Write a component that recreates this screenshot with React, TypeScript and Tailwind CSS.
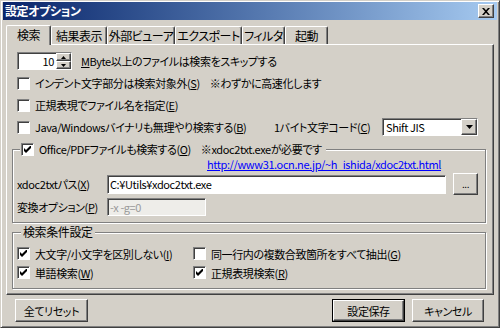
import React from 'react';

const raised =
  'border border-t-white border-l-white border-r-[#404040] border-b-[#404040] shadow-[inset_-1px_-1px_0_#808080]';
const sunken =
  'border border-t-[#808080] border-l-[#808080] border-r-white border-b-white shadow-[inset_1px_1px_0_#404040]';
const etched = 'border border-[#808080] shadow-[inset_1px_1px_0_#fff,1px_1px_0_#fff]';

function K({ c }: { c: string }) {
  return <span className="underline underline-offset-[1px]">{c}</span>;
}

function Check({ on }: { on?: boolean }) {
  return (
    <span className={`w-[13px] h-[13px] bg-white shrink-0 flex items-center justify-center ${sunken}`}>
      {on && (
        <svg width="7" height="7" viewBox="0 0 7 7">
          <path d="M0 2 L2 4 L7 -1 L7 2 L2 7 L0 5 Z" fill="#000" />
        </svg>
      )}
    </span>
  );
}

function CheckRow({ on, children }: { on?: boolean; children: React.ReactNode }) {
  return (
    <div className="flex items-center gap-[5px] h-[22px]">
      <Check on={on} />
      <span className="whitespace-nowrap">{children}</span>
    </div>
  );
}

function Btn({ label, def, w }: { label: string; def?: boolean; w: string }) {
  if (def) {
    return (
      <div className={`${w} h-[23px] border border-black`}>
        <div className={`h-full flex items-center justify-center ${raised}`}>{label}</div>
      </div>
    );
  }
  return <div className={`${w} h-[23px] flex items-center justify-center ${raised}`}>{label}</div>;
}

const tabs = [
  { t: '結果表示', w: 'w-[56px]' },
  { t: '外部ビューア', w: 'w-[68px]' },
  { t: 'エクスポート', w: 'w-[67px]' },
  { t: 'フィルタ', w: 'w-[43px]' },
  { t: '起動', w: 'w-[43px]' },
];

export default function App() {
  return (
    <div className="w-[500px] h-[328px] bg-[#d4d0c8] text-[11px] leading-[14px] tracking-[-0.4px] text-black font-['Noto_Sans_CJK_JP',sans-serif] [font-feature-settings:'palt'] border border-t-[#d4d0c8] border-l-[#d4d0c8] border-r-[#404040] border-b-[#404040] shadow-[inset_1px_1px_0_#fff,inset_-1px_-1px_0_#808080] px-[2px] pt-[1px] flex flex-col">
      {/* title bar */}
      <div className="h-[18px] flex items-center justify-between bg-gradient-to-r from-[#0a246a] to-[#a6caf0] pl-[2px] pr-[3px]">
        <span className="text-white font-bold text-[12px]">設定オプション</span>
        <div className={`w-[16px] h-[14px] bg-[#d4d0c8] flex items-center justify-center ${raised}`}>
          <svg width="8" height="7" viewBox="0 0 8 7">
            <path d="M0 0 L2 0 L4 2.2 L6 0 L8 0 L5 3.5 L8 7 L6 7 L4 4.8 L2 7 L0 7 L3 3.5 Z" fill="#000" />
          </svg>
        </div>
      </div>

      {/* tabs */}
      <div className="mt-[4px] h-[20px] flex items-end pl-[3px] text-[12px] tracking-[-0.5px] whitespace-nowrap">
        <div className="w-[45px] h-[20px] mb-[-1px] relative z-10 bg-[#d4d0c8] border-t border-l border-t-white border-l-white border-r border-r-[#404040] shadow-[inset_-1px_0_0_#808080] rounded-t-[2px] flex items-center justify-center pb-[1px]">
          検索
        </div>
        {tabs.map((x) => (
          <div
            key={x.t}
            className={`${x.w} h-[18px] border-t border-l border-t-white border-l-white border-r border-r-[#404040] shadow-[inset_-1px_0_0_#808080] rounded-t-[2px] flex items-center justify-center [font-feature-settings:'palt']`}
          >
            {x.t}
          </div>
        ))}
      </div>

      {/* panel */}
      <div className={`ml-[3px] mr-[3px] h-[251px] flex flex-col pt-[5px] pl-[10px] pr-[6px] ${raised}`}>
        <div className="flex items-center h-[22px]">
          <div className={`w-[55px] h-[18px] bg-white flex items-center ${sunken}`}>
            <span className="flex-1 text-right pr-[2px]">10</span>
            <div className="w-[15px] h-full flex flex-col">
              <div className={`flex-1 bg-[#d4d0c8] flex items-center justify-center ${raised}`}>
                <svg width="5" height="3" viewBox="0 0 5 3"><path d="M0 3 L2.5 0 L5 3 Z" fill="#000" /></svg>
              </div>
              <div className={`flex-1 bg-[#d4d0c8] flex items-center justify-center ${raised}`}>
                <svg width="5" height="3" viewBox="0 0 5 3"><path d="M0 0 L5 0 L2.5 3 Z" fill="#000" /></svg>
              </div>
            </div>
          </div>
          <span className="ml-[9px] whitespace-nowrap">
            <K c="M" />Byte以上のファイルは検索をスキップする
          </span>
        </div>

        <CheckRow>
          インデント文字部分は検索対象外(<K c="S" />)<span className="ml-[10px]">※わずかに高速化します</span>
        </CheckRow>
        <CheckRow>
          正規表現でファイル名を指定(<K c="E" />)
        </CheckRow>
        <div className="flex items-center h-[22px]">
          <div className="w-[257px] flex items-center gap-[5px]">
            <Check />
            <span className="whitespace-nowrap">
              Java/Windowsバイナリも無理やり検索する(<K c="B" />)
            </span>
          </div>
          <span className="w-[108px] whitespace-nowrap">
            1バイト文字コード(<K c="C" />)
          </span>
          <div className={`w-[96px] h-[18px] bg-white flex items-center ${sunken}`}>
            <span className="flex-1 pl-[3px]">Shift JIS</span>
            <div className={`w-[16px] h-full bg-[#d4d0c8] flex items-center justify-center ${raised}`}>
              <svg width="7" height="4" viewBox="0 0 7 4"><path d="M0 0 L7 0 L3.5 4 Z" fill="#000" /></svg>
            </div>
          </div>
        </div>

        {/* office group */}
        <fieldset className={`ml-[-5px] mr-[1px] px-[4px] pb-[5px] ${etched}`}>
          <legend className="ml-[3px] px-[1px] bg-[#d4d0c8]">
            <div className="flex items-center gap-[5px] h-[22px] pr-[3px]">
              <Check on />
              <span className="whitespace-nowrap">
                Office/PDFファイルも検索する(<K c="O" />)<span className="ml-[10px]">※xdoc2txt.exeが必要です</span>
              </span>
            </div>
          </legend>
          <div className="mt-[-3px] h-[14px] pl-[190px] text-[#0000ff] underline whitespace-nowrap">
            http://www31.ocn.ne.jp/~h_ishida/xdoc2txt.html
          </div>
          <div className="mt-[2px] h-[22px] flex items-center">
            <span className="w-[90px] whitespace-nowrap">
              xdoc2txtパス(<K c="X" />)
            </span>
            <div className={`w-[339px] h-[19px] bg-white flex items-center pl-[2px] ${sunken}`}>C:¥Utils¥xdoc2txt.exe</div>
            <div className={`ml-[7px] w-[25px] h-[22px] flex items-center justify-center text-[10px] ${raised}`}>...</div>
          </div>
          <div className="mt-[2px] h-[20px] flex items-center">
            <span className="w-[90px] whitespace-nowrap">
              変換オプション(<K c="P" />)
            </span>
            <div className={`w-[99px] h-[18px] bg-[#eeede9] text-[#9a9a9a] flex items-center pl-[2px] ${sunken}`}>-x -g=0</div>
          </div>
        </fieldset>

        {/* search group */}
        <fieldset className={`mt-[1px] ml-[-5px] mr-[1px] px-[4px] pb-[6px] ${etched}`}>
          <legend className="ml-[4px] px-[2px] bg-[#d4d0c8] h-[16px] leading-[16px] text-[12px]">検索条件設定</legend>
          <div className="mt-[4px] grid grid-cols-[176px_1fr] grid-rows-[19px_19px] items-center">
            <div className="flex items-center gap-[5px]">
              <Check on />
              <span className="whitespace-nowrap">
                大文字/小文字を区別しない(<K c="I" />)
              </span>
            </div>
            <div className="flex items-center gap-[5px]">
              <Check />
              <span className="whitespace-nowrap">
                同一行内の複数合致箇所をすべて抽出(<K c="G" />)
              </span>
            </div>
            <div className="flex items-center gap-[5px]">
              <Check on />
              <span className="whitespace-nowrap">
                単語検索(<K c="W" />)
              </span>
            </div>
            <div className="flex items-center gap-[5px]">
              <Check on />
              <span className="whitespace-nowrap">
                正規表現検索(<K c="R" />)
              </span>
            </div>
          </div>
        </fieldset>
      </div>

      {/* bottom buttons */}
      <div className="mt-[4px] flex items-center pl-[12px] pr-[13px]">
        <Btn label="全てリセット" w="w-[73px]" />
        <div className="ml-auto flex gap-[7px]">
          <Btn label="設定保存" def w="w-[73px]" />
          <Btn label="キャンセル" w="w-[72px]" />
        </div>
      </div>
    </div>
  );
}
